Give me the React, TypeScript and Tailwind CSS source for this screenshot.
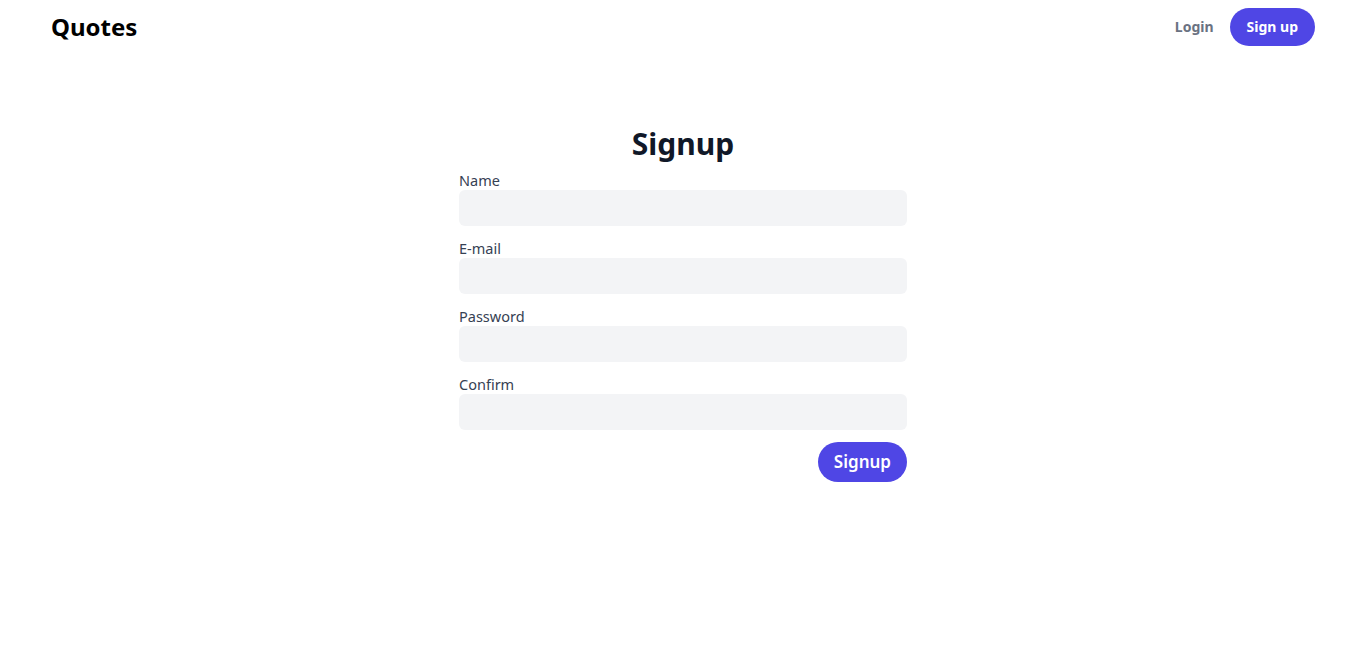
import React from "react";

const fields = ["Name", "E-mail", "Password", "Confirm"];

export default function App() {
  return (
    <div className="min-h-screen bg-white" style={{ fontFamily: '"Noto Sans", sans-serif' }}>
      <nav className="mx-auto flex h-[53px] max-w-7xl items-center justify-between px-2">
        <a className="text-2xl font-bold text-black">Quotes</a>
        <div className="flex items-center gap-4">
          <a className="text-sm font-bold text-gray-500">Login</a>
          <a className="rounded-full bg-[#4f46e5] px-[17px] py-[9px] text-sm font-bold text-white">Sign up</a>
        </div>
      </nav>
      <main className="mx-auto mt-[73px] w-full max-w-md">
        <h1 className="mb-2 text-center text-3xl font-bold text-gray-900">Signup</h1>
        <form className="flex flex-col gap-3">
          {fields.map((f) => (
            <label key={f} className="flex flex-col">
              <span className="text-[14.5px] leading-5 font-normal text-gray-700">{f}</span>
              <input
                type={f === "Password" || f === "Confirm" ? "password" : "text"}
                className="h-9 w-full rounded-md bg-gray-100 px-3 outline-none"
              />
            </label>
          ))}
          <div className="flex justify-end">
            <button type="button" className="rounded-full bg-[#4f46e5] px-4 py-1.5 text-[17px] leading-7 font-semibold text-white">
              Signup
            </button>
          </div>
        </form>
      </main>
    </div>
  );
}
